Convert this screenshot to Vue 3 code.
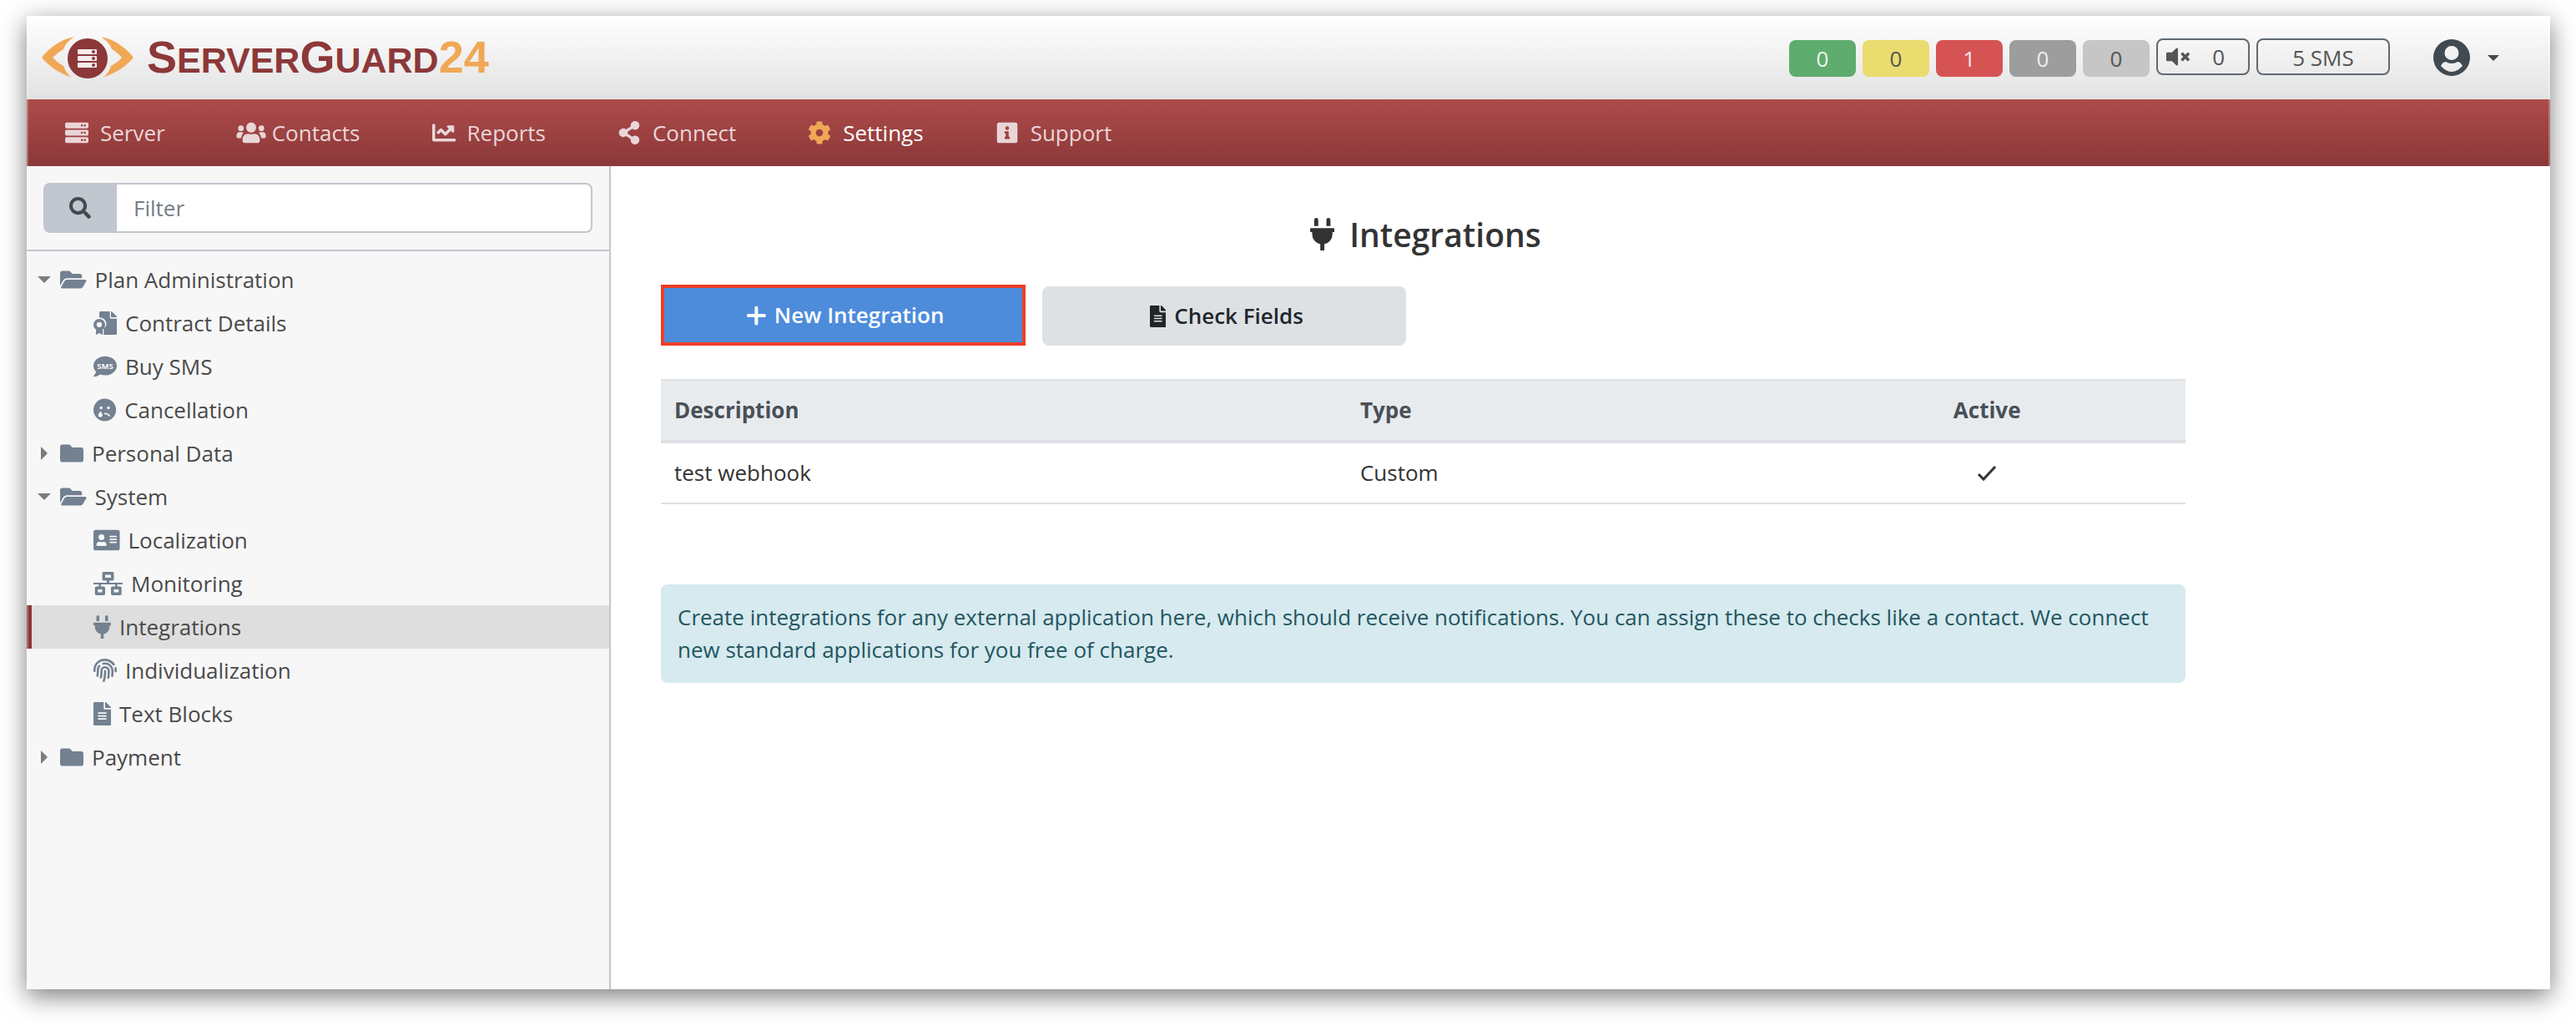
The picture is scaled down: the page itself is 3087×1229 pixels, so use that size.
<script setup>
import { ref } from 'vue'

const FILE =
  'M224 136V0H24C10.7 0 0 10.7 0 24v464c0 13.3 10.7 24 24 24h336c13.3 0 24-10.7 24-24V160H248c-13.2 0-24-10.8-24-24zm64 236c0 6.6-5.4 12-12 12H108c-6.6 0-12-5.4-12-12v-8c0-6.6 5.4-12 12-12h168c6.6 0 12 5.4 12 12v8zm0-64c0 6.6-5.4 12-12 12H108c-6.6 0-12-5.4-12-12v-8c0-6.6 5.4-12 12-12h168c6.6 0 12 5.4 12 12v8zm0-72v8c0 6.6-5.4 12-12 12H108c-6.6 0-12-5.4-12-12v-8c0-6.6 5.4-12 12-12h168c6.6 0 12 5.4 12 12zm96-114.1v6.1H256V0h6.1c6.4 0 12.5 2.5 17 7l97.9 98c4.5 4.5 7 10.6 7 16.9z'
const PLUG =
  'M320,32a32,32,0,0,0-64,0v96h64Zm48,128H16A16,16,0,0,0,0,176v32a16,16,0,0,0,16,16H32v32A160.07,160.07,0,0,0,160,412.8V512h64V412.8A160.07,160.07,0,0,0,352,256V224h16a16,16,0,0,0,16-16V176A16,16,0,0,0,368,160ZM128,32a32,32,0,0,0-64,0v96h64Z'
const FOLDER =
  'M464 128H272l-64-64H48C21.49 64 0 85.49 0 112v288c0 26.51 21.49 48 48 48h416c26.51 0 48-21.49 48-48V176c0-26.51-21.49-48-48-48z'
const FOLDER_OPEN =
  'M572.694 292.093L500.27 416.248A63.997 63.997 0 0 1 444.989 448H45.025c-18.523 0-30.064-20.093-20.731-36.093l72.424-124.155A64 64 0 0 1 152 256h399.964c18.523 0 30.064 20.093 20.73 36.093zM152 224h328v-48c0-26.51-21.49-48-48-48H272l-64-64H48C21.49 64 0 85.49 0 112v278.046l69.077-118.418C86.214 242.25 117.989 224 152 224z'
const FINGERPRINT =
  'M256.12 245.96c-13.25 0-24 10.74-24 24 1.14 72.25-8.14 141.9-27.7 211.55-2.73 9.72 2.15 30.49 23.12 30.49 10.48 0 20.11-6.92 23.09-17.52 13.53-47.91 31.04-125.41 29.48-224.52.01-13.25-10.73-24-23.99-24zm-.86-81.73C194 164.16 151.25 211.3 152.1 265.32c.75 47.94-3.75 95.91-13.37 142.55-2.69 12.98 5.67 25.69 18.64 28.36 13.05 2.67 25.67-5.66 28.36-18.64 10.34-50.09 15.17-101.58 14.37-153.02-.41-25.95 19.92-52.49 54.45-52.34 31.31.47 57.15 25.34 57.62 55.47.77 48.05-2.81 96.33-10.61 143.55-2.17 13.06 6.69 25.42 19.76 27.58 19.97 3.33 26.81-15.1 27.58-19.77 8.28-50.03 12.06-101.21 11.27-152.11-.88-55.8-47.94-101.88-104.91-102.72zm-110.69-19.78c-10.3-8.34-25.37-6.8-33.76 3.48-25.62 31.5-39.39 71.28-38.75 112 .59 37.58-2.47 75.27-9.11 112.05-2.34 13.05 6.31 25.53 19.36 27.89 20.11 3.5 27.07-14.81 27.89-19.36 7.19-39.84 10.5-80.66 9.86-121.33-.47-29.88 9.2-57.88 28-80.97 8.35-10.28 6.79-25.39-3.49-33.76zm109.47-62.33c-15.41-.41-30.87 1.44-45.78 4.97-12.89 3.06-20.87 15.98-17.83 28.89 3.06 12.89 16 20.83 28.89 17.83 11.05-2.61 22.47-3.77 34-3.69 75.43 1.13 137.73 61.5 138.88 134.58.59 37.88-1.28 76.11-5.58 113.63-1.5 13.17 7.95 25.08 21.11 26.58 16.72 1.95 25.51-11.88 26.58-21.11a929.06 929.06 0 0 0 5.89-119.85c-1.56-98.75-85.07-180.33-186.16-181.83zm252.07 121.45c-2.86-12.92-15.51-21.2-28.61-18.27-12.94 2.86-21.12 15.66-18.26 28.61 4.71 21.41 4.91 37.41 4.7 61.6-.11 13.27 10.55 24.09 23.8 24.2h.2c13.17 0 23.89-10.61 24-23.8.18-22.18.4-44.11-5.83-72.34zm-40.12-90.72C417.29 43.46 337.6 1.29 252.81.02 183.02-.82 118.47 24.91 70.46 72.94 24.09 119.37-.9 181.04.14 246.65l-.12 21.47c-.39 13.25 10.03 24.31 23.28 24.69.23.02.48.02.72.02 12.92 0 23.59-10.3 23.97-23.3l.16-23.64c-.83-52.5 19.16-101.86 56.28-139 38.76-38.8 91.34-59.67 147.68-58.86 69.45 1.03 134.73 35.56 174.62 92.39 7.61 10.86 22.56 13.45 33.42 5.86 10.84-7.62 13.46-22.59 5.84-33.43z'
const CONTRACT =
  'M128 24a24 24 0 0 1 24-24H360V136a24 24 0 0 0 24 24H512V488a24 24 0 0 1-24 24H224V378a158 158 0 0 0 60-122A158 158 0 0 0 128 132ZM384 0h8c6 0 12 2 17 7l96 98c5 5 7 11 7 17v6H384ZM128 164a128 128 0 1 1 0 256A128 128 0 1 1 128 164ZM128 232a58 58 0 1 0 0 116 58 58 0 1 0 0-116ZM56 400 128 424 200 400V505c0 7-7 9-12 5L128 470 68 510c-5 4-12 2-12-5Z'
const SAD =
  'M248 8C111 8 0 119 0 256s111 248 248 248 248-111 248-248S385 8 248 8zm80 168c17.7 0 32 14.3 32 32s-14.3 32-32 32-32-14.3-32-32 14.3-32 32-32zM152 416c-26.5 0-48-21-48-47 0-20 28.5-60.4 41.6-77.8 3.2-4.3 9.6-4.3 12.8 0C171.5 308.6 200 349 200 369c0 26-21.5 47-48 47zm16-176c-17.7 0-32-14.3-32-32s14.3-32 32-32 32 14.3 32 32-14.3 32-32 32zm170.2 154.2C315.8 367.4 282.9 352 248 352c-21.2 0-21.2-32 0-32 44.4 0 86.3 19.6 114.7 53.8 13.8 16.4-11.2 36.5-24.5 20.4z'
const IDCARD =
  'M48 32H528A48 48 0 0 1 576 80V432A48 48 0 0 1 528 480H48A48 48 0 0 1 0 432V80A48 48 0 0 1 48 32ZM176 128A64 64 0 1 0 176 256 64 64 0 1 0 176 128ZM64 362c0 12 10 22 22 22H266c12 0 22-10 22-22V358c0-36-30-66-66-66-14 0-22 8-46 8s-32-8-46-8c-36 0-66 30-66 66ZM360 160a8 8 0 0 0-8 8v16a8 8 0 0 0 8 8H504a8 8 0 0 0 8-8v-16a8 8 0 0 0-8-8ZM360 224a8 8 0 0 0-8 8v16a8 8 0 0 0 8 8H504a8 8 0 0 0 8-8v-16a8 8 0 0 0-8-8ZM360 288a8 8 0 0 0-8 8v16a8 8 0 0 0 8 8H504a8 8 0 0 0 8-8v-16a8 8 0 0 0-8-8Z'
const NETWORK =
  'M224 0H416A32 32 0 0 1 448 32V160A32 32 0 0 1 416 192H348V236H628a12 12 0 0 1 12 12V264a12 12 0 0 1-12 12H524V320H584A32 32 0 0 1 616 352V480A32 32 0 0 1 584 512H416A32 32 0 0 1 384 480V352A32 32 0 0 1 416 320H476V276H164V320H224A32 32 0 0 1 256 352V480A32 32 0 0 1 224 512H64A32 32 0 0 1 32 480V352A32 32 0 0 1 64 320H116V276H12A12 12 0 0 1 0 264V248A12 12 0 0 1 12 236H292V192H224A32 32 0 0 1 192 160V32A32 32 0 0 1 224 0ZM256 64V128H384V64ZM96 384V448H192V384ZM448 384V448H552V384Z'
const SERVER =
  'M32 32H480A32 32 0 0 1 512 64V128A32 32 0 0 1 480 160H32A32 32 0 0 1 0 128V64A32 32 0 0 1 32 32ZM32 192H480A32 32 0 0 1 512 224V288A32 32 0 0 1 480 320H32A32 32 0 0 1 0 288V224A32 32 0 0 1 32 192ZM32 352H480A32 32 0 0 1 512 384V448A32 32 0 0 1 480 480H32A32 32 0 0 1 0 448V384A32 32 0 0 1 32 352ZM368 72a24 24 0 1 0 0 48 24 24 0 1 0 0-48ZM432 72a24 24 0 1 0 0 48 24 24 0 1 0 0-48ZM368 232a24 24 0 1 0 0 48 24 24 0 1 0 0-48ZM432 232a24 24 0 1 0 0 48 24 24 0 1 0 0-48ZM368 392a24 24 0 1 0 0 48 24 24 0 1 0 0-48ZM432 392a24 24 0 1 0 0 48 24 24 0 1 0 0-48Z'
const USERS =
  'M320 32C260 32 212 80 212 142S260 252 320 252 428 204 428 142 380 32 320 32ZM96 96A62 62 0 1 0 96 220 62 62 0 1 0 96 96ZM544 96A62 62 0 1 0 544 220 62 62 0 1 0 544 96ZM250 280C180 280 132 332 132 400V440C132 464 150 480 174 480H466C490 480 508 464 508 440V400C508 332 460 280 390 280 366 280 350 292 320 292S274 280 250 280ZM64 240C28 240 0 270 0 306V344C0 362 12 374 30 374H100C104 330 124 290 154 262 142 248 126 240 110 240ZM576 240C612 240 640 270 640 306V344C640 362 628 374 610 374H540C536 330 516 290 486 262 498 248 514 240 530 240Z'
const CHART =
  'M496 384H64V80c0-8.84-7.16-16-16-16H16C7.16 64 0 71.16 0 80v336c0 17.67 14.33 32 32 32h464c8.84 0 16-7.16 16-16v-32c0-8.84-7.16-16-16-16zM464 96H345.94c-21.38 0-32.09 25.85-16.97 40.97l32.4 32.4L288 242.75l-73.37-73.37c-12.5-12.5-32.76-12.5-45.25 0l-68.69 68.69c-6.25 6.25-6.25 16.38 0 22.63l22.62 22.62c6.25 6.25 16.38 6.25 22.63 0L192 237.25l73.37 73.37c12.5 12.5 32.76 12.5 45.25 0l96-96 32.4 32.4c15.12 15.12 40.97 4.41 40.97-16.97V112c.01-8.84-7.15-16-15.99-16z'
const SHARE =
  'M352 320c-22.608 0-43.387 7.819-59.79 20.895l-102.486-64.054a96.551 96.551 0 0 0 0-41.683l102.486-64.054C308.613 184.181 329.392 192 352 192c53.019 0 96-42.981 96-96S405.019 0 352 0s-96 42.981-96 96c0 7.158.79 14.13 2.276 20.841L155.79 180.895C139.387 167.819 118.608 160 96 160c-53.019 0-96 42.981-96 96s42.981 96 96 96c22.608 0 43.387-7.819 59.79-20.895l102.486 64.054A96.301 96.301 0 0 0 256 416c0 53.019 42.981 96 96 96s96-42.981 96-96-42.981-96-96-96z'
const COG =
  'M487.4 315.7l-42.6-24.6c4.3-23.2 4.3-47 0-70.2l42.6-24.6c4.9-2.8 7.1-8.6 5.5-14-11.1-35.6-30-67.8-54.7-94.6-3.8-4.1-10-5.1-14.8-2.3L380.8 110c-17.9-15.4-38.5-27.3-60.8-35.1V25.8c0-5.6-3.9-10.5-9.4-11.7-36.7-8.2-74.3-7.8-109.2 0-5.5 1.2-9.4 6.1-9.4 11.7V75c-22.2 7.9-42.8 19.8-60.8 35.1L88.7 85.5c-4.9-2.8-11-1.9-14.8 2.3-24.7 26.7-43.6 58.9-54.7 94.6-1.7 5.4.6 11.2 5.5 14L67.3 221c-4.3 23.2-4.3 47 0 70.2l-42.6 24.6c-4.9 2.8-7.1 8.6-5.5 14 11.1 35.6 30 67.8 54.7 94.6 3.8 4.1 10 5.1 14.8 2.3l42.6-24.6c17.9 15.4 38.5 27.3 60.8 35.1v49.2c0 5.6 3.9 10.5 9.4 11.7 36.7 8.2 74.3 7.8 109.2 0 5.5-1.2 9.4-6.1 9.4-11.7v-49.2c22.2-7.9 42.8-19.8 60.8-35.1l42.6 24.6c4.9 2.8 11 1.9 14.8-2.3 24.7-26.7 43.6-58.9 54.7-94.6 1.5-5.5-.7-11.3-5.6-14.1zM256 336c-44.1 0-80-35.9-80-80s35.9-80 80-80 80 35.9 80 80-35.9 80-80 80z'
const INFO =
  'M48 32H400A48 48 0 0 1 448 80V432A48 48 0 0 1 400 480H48A48 48 0 0 1 0 432V80A48 48 0 0 1 48 32ZM224 112a42 42 0 1 0 0 84 42 42 0 1 0 0-84ZM180 222a12 12 0 0 0-12 12V260a12 12 0 0 0 12 12H192V344H180a12 12 0 0 0-12 12V382a12 12 0 0 0 12 12H268a12 12 0 0 0 12-12V356a12 12 0 0 0-12-12H256V234a12 12 0 0 0-12-12Z'

const menu = [
  { label: 'Server', w: 512, d: SERVER },
  { label: 'Contacts', w: 640, d: USERS, tight: true },
  { label: 'Reports', w: 512, d: CHART },
  { label: 'Connect', w: 448, d: SHARE },
  { label: 'Settings', w: 512, d: COG, active: true },
  { label: 'Support', w: 448, d: INFO }
]

const counters = [
  { tone: 'ok', value: 0, title: 'OK' },
  { tone: 'warn', value: 0, title: 'Warning' },
  { tone: 'error', value: 1, title: 'Error' },
  { tone: 'down', value: 0, title: 'Unknown' },
  { tone: 'off', value: 0, title: 'Inactive' }
]

const tree = ref([
  {
    label: 'Plan Administration',
    open: true,
    items: [
      { label: 'Contract Details', w: 512, d: CONTRACT },
      { label: 'Buy SMS', w: 512, sms: true },
      { label: 'Cancellation', w: 496, d: SAD }
    ]
  },
  { label: 'Personal Data', open: false, items: [] },
  {
    label: 'System',
    open: true,
    items: [
      { label: 'Localization', w: 576, d: IDCARD },
      { label: 'Monitoring', w: 640, d: NETWORK },
      { label: 'Integrations', w: 384, d: PLUG, active: true },
      { label: 'Individualization', w: 512, d: FINGERPRINT },
      { label: 'Text Blocks', w: 384, d: FILE }
    ]
  },
  { label: 'Payment', open: false, items: [] }
])

const integrations = [{ description: 'test webhook', type: 'Custom', active: true }]
const filter = ref('')
</script>

<template>
  <div class="frame">
    <header class="top">
      <a class="brand" href="#" aria-label="ServerGuard24">
        <svg class="eye" viewBox="0 0 110 50" aria-hidden="true">
          <path fill="#f0a856" d="M0 25C10 12 24 3 39 0 33 4 28 9 26 15 21 18 17 21 13 25 17 29 21 32 26 35 28 41 32 46 36 49 22 44 10 37 0 25Z" />
          <path fill="#f0a856" d="M110 25C100 12 86 3 71 0 77 4 82 9 84 15 89 18 93 21 96 25 93 29 88 32 83 35 81 41 78 46 73 49 87 44 100 37 110 25Z" />
          <circle cx="55" cy="26" r="24" fill="#8c3839" />
          <g fill="#f4ecec">
            <rect x="43" y="15" width="23" height="6" rx="1" />
            <rect x="43" y="23" width="23" height="6" rx="1" />
            <rect x="43" y="31" width="23" height="6" rx="1" />
          </g>
          <g fill="#8c3839">
            <circle cx="62" cy="18" r="2" />
            <circle cx="62" cy="26" r="2" />
            <circle cx="62" cy="34" r="2" />
          </g>
        </svg>
        <span class="wordmark">S<small>ERVER</small>G<small>UARD</small><b>24</b></span>
      </a>
      <div class="status">
        <a v-for="c in counters" :key="c.tone" href="#" class="pill" :class="c.tone" :title="c.title">{{ c.value }}</a>
        <a href="#" class="pill outline muted" title="Muted">
          <svg class="speaker" viewBox="0 0 512 512" aria-hidden="true">
            <path d="M215 71l-89 89H24a24 24 0 0 0-24 24v144a24 24 0 0 0 24 24h102l89 89c15 15 41 4.5 41-17V88c0-21.5-26-32-41-17zM461.64 256l45.64-45.64c6.3-6.3 6.3-16.52 0-22.82l-22.82-22.82c-6.3-6.3-16.52-6.3-22.82 0L416 210.36l-45.64-45.64c-6.3-6.3-16.52-6.3-22.82 0l-22.82 22.82c-6.3 6.3-6.3 16.52 0 22.82L370.36 256l-45.63 45.63c-6.3 6.3-6.3 16.52 0 22.82l22.82 22.82c6.3 6.3 16.52 6.3 22.82 0L416 301.64l45.64 45.64c6.3 6.3 16.52 6.3 22.82 0l22.82-22.82c6.3-6.3 6.3-16.52 0-22.82L461.64 256z" />
          </svg>
          <span>0</span>
        </a>
        <a href="#" class="pill outline sms">5 SMS</a>
        <button type="button" class="account" aria-label="Account">
          <svg class="avatar" viewBox="0 0 44 44" aria-hidden="true">
            <path fill-rule="evenodd" d="M22 0A22 22 0 1 0 22 44 22 22 0 1 0 22 0ZM22 8A8 8 0 1 1 22 25 8 8 0 1 1 22 8ZM15 27C17 28 19 29 22 29S27 28 29 27C32 27 34 30 35 32 31 36 27 39 22 39S13 36 9 32C10 30 12 27 15 27Z" />
          </svg>
          <svg class="caret" viewBox="0 0 14 7" aria-hidden="true"><path d="M0 0H14L7 7Z" /></svg>
        </button>
      </div>
    </header>

    <nav class="menu" aria-label="Main">
      <a v-for="m in menu" :key="m.label" href="#" class="menu-item" :class="{ active: m.active, tight: m.tight }">
        <svg class="menu-icon" :viewBox="`0 0 ${m.w} 512`" aria-hidden="true"><path fill-rule="evenodd" :d="m.d" /></svg>
        <span>{{ m.label }}</span>
      </a>
    </nav>

    <div class="body">
      <aside class="side">
        <form class="filter" @submit.prevent>
          <label class="filter-label" for="filter" aria-label="Filter">
            <svg class="search" viewBox="0 0 512 512" aria-hidden="true">
              <path d="M505 442.7L405.3 343c-4.5-4.5-10.6-7-17-7H372c27.6-35.3 44-79.7 44-128C416 93.1 322.9 0 208 0S0 93.1 0 208s93.1 208 208 208c48.3 0 92.7-16.4 128-44v16.3c0 6.4 2.5 12.5 7 17l99.7 99.7c9.4 9.4 24.6 9.4 33.9 0l28.3-28.3c9.4-9.4 9.4-24.6.1-34zM208 336c-70.7 0-128-57.2-128-128 0-70.7 57.2-128 128-128 70.7 0 128 57.2 128 128 0 70.7-57.2 128-128 128z" />
            </svg>
          </label>
          <input id="filter" v-model="filter" class="filter-input" type="text" placeholder="Filter" />
        </form>
        <ul class="tree">
          <li v-for="g in tree" :key="g.label">
            <button type="button" class="row group" :aria-expanded="g.open" @click="g.open = !g.open">
              <span class="twist">
                <svg v-if="g.open" width="16" height="8" viewBox="0 0 16 8" aria-hidden="true"><path d="M0 0H16L8 8Z" /></svg>
                <svg v-else width="8" height="16" viewBox="0 0 8 16" aria-hidden="true"><path d="M0 0V16L8 8Z" /></svg>
              </span>
              <svg class="tree-icon" :viewBox="g.open ? '0 0 576 512' : '0 0 512 512'" aria-hidden="true">
                <path :d="g.open ? FOLDER_OPEN : FOLDER" />
              </svg>
              <span>{{ g.label }}</span>
            </button>
            <ul v-if="g.open">
              <li v-for="i in g.items" :key="i.label">
                <a href="#" class="row leaf" :class="{ active: i.active }">
                  <svg class="tree-icon" :viewBox="`0 0 ${i.w} 512`" aria-hidden="true">
                    <template v-if="i.sms">
                      <path d="M256 32C115 32 0 125 0 240c0 49 21 94 57 130-13 51-55 95-55 96-4 5-2 14 6 14 67 0 116-32 141-51 32 12 69 19 107 19 141 0 256-93 256-208S397 32 256 32Z" />
                      <text x="256" y="304" text-anchor="middle" class="bubble">SMS</text>
                    </template>
                    <path v-else fill-rule="evenodd" :d="i.d" />
                  </svg>
                  <span>{{ i.label }}</span>
                </a>
              </li>
            </ul>
          </li>
        </ul>
      </aside>

      <main class="main">
        <section class="content">
          <h1 class="title">
            <svg class="title-icon" viewBox="0 0 384 512" aria-hidden="true"><path :d="PLUG" /></svg>
            <span>Integrations</span>
          </h1>
          <div class="actions">
            <button type="button" class="btn primary">
              <svg class="btn-icon" viewBox="0 0 448 512" aria-hidden="true">
                <path d="M416 216H264V64c0-18-14-32-32-32h-16c-18 0-32 14-32 32v152H32c-18 0-32 14-32 32v16c0 18 14 32 32 32h152v152c0 18 14 32 32 32h16c18 0 32-14 32-32V296h152c18 0 32-14 32-32v-16c0-18-14-32-32-32z" />
              </svg>
              <span>New Integration</span>
            </button>
            <button type="button" class="btn plain">
              <svg class="btn-icon" viewBox="0 0 384 512" aria-hidden="true"><path :d="FILE" /></svg>
              <span>Check Fields</span>
            </button>
          </div>
          <table class="list">
            <thead>
              <tr>
                <th class="c-desc" scope="col">Description</th>
                <th class="c-type" scope="col">Type</th>
                <th class="c-active" scope="col">Active</th>
              </tr>
            </thead>
            <tbody>
              <tr v-for="r in integrations" :key="r.description">
                <td>{{ r.description }}</td>
                <td>{{ r.type }}</td>
                <td class="c-active">
                  <svg v-if="r.active" class="check" viewBox="0 0 24 20" role="img" aria-label="Active">
                    <path d="M2 11L8 17L22 2" />
                  </svg>
                </td>
              </tr>
            </tbody>
          </table>
          <p class="note">
            Create integrations for any external application here, which should receive notifications. You can assign these to checks like a contact. We connect new standard applications for you free of charge.
          </p>
        </section>
      </main>
    </div>
  </div>
</template>

<style>
body {
  margin: 0;
  background: #fff;
}
</style>

<style scoped>
.frame {
  position: relative;
  display: flex;
  flex-direction: column;
  min-height: calc(100vh - 63px);
  margin: 19px 31px 44px 32px;
  background: #fff;
  box-shadow: 0 8px 28px rgba(0, 0, 0, 0.52);
  color: #333;
  font: 26px/39px 'Open Sans', 'Noto Sans', sans-serif;
}
.frame::after {
  content: '';
  position: absolute;
  inset: 0;
  border: solid rgba(255, 255, 255, 0.25);
  border-width: 0 2px;
  pointer-events: none;
}
a {
  color: inherit;
  text-decoration: none;
}
button {
  font: inherit;
  color: inherit;
  border: 0;
  background: none;
  padding: 0;
  cursor: pointer;
}
svg {
  display: block;
  flex: none;
  fill: currentColor;
}
ul {
  list-style: none;
  margin: 0;
  padding: 0;
}

/* header */
.top {
  display: flex;
  align-items: center;
  justify-content: space-between;
  height: 100px;
  padding: 0 61px 0 18px;
  background: linear-gradient(#fff, #e2e2e2);
}
.brand {
  display: flex;
  align-items: center;
  gap: 16px;
}
.eye {
  width: 110px;
  height: 50px;
}
.wordmark {
  padding-top: 2px;
  font: bold 54px/60px 'Liberation Sans', Arial, sans-serif;
  color: #8c3839;
}
.wordmark small {
  font-size: 43px;
}
.wordmark b {
  color: #f0a856;
}
.status {
  display: flex;
  align-items: center;
  gap: 8px;
}
.pill {
  box-sizing: border-box;
  width: 80px;
  height: 44px;
  margin-top: 2px;
  border-radius: 8px;
  line-height: 44px;
  text-align: center;
  color: #555;
}
.ok {
  background: #5fac6f;
  color: #eef4ee;
}
.warn {
  background: #ebdc70;
}
.error {
  background: #d65354;
  color: #f8e8e8;
}
.down {
  background: #9d9d9d;
  color: #eee;
}
.off {
  background: #c6c6c6;
}
.outline {
  margin-top: 0;
  margin-bottom: 2px;
  border: 2px solid #5f6973;
  line-height: 42px;
}
.muted {
  display: flex;
  align-items: center;
  justify-content: space-between;
  width: 112px;
  padding: 0 28px 0 10px;
}
.speaker {
  width: 28px;
  height: 28px;
}
.sms {
  width: 160px;
}
.account {
  display: flex;
  align-items: center;
  gap: 21px;
  margin-left: 44px;
  color: #414a51;
}
.avatar {
  width: 44px;
  height: 44px;
}
.caret {
  width: 14px;
  height: 7px;
}

/* main menu */
.menu {
  display: flex;
  align-items: center;
  gap: 78px;
  height: 80px;
  padding: 0 38px;
  background: linear-gradient(#ae4b4a, #8b3839);
  color: #ead6d7;
}
.menu-item {
  display: flex;
  align-items: center;
  gap: 6px;
}
.menu-item.tight {
  gap: 3px;
  margin-left: 3px;
}
.menu-icon {
  width: 44px;
  height: 28px;
}
.menu-item.active {
  color: #fff;
}
.active .menu-icon {
  color: #f0a856;
}

/* sidebar */
.body {
  flex: 1;
  display: flex;
}
.side {
  flex: none;
  box-sizing: border-box;
  width: 700px;
  background: #f7f7f7;
  border-right: 2px solid #c1c6ce;
}
.filter {
  display: flex;
  padding: 20px;
  border-bottom: 2px solid #c1c6ce;
}
.filter-label {
  display: flex;
  align-items: center;
  justify-content: center;
  width: 88px;
  border-radius: 8px 0 0 8px;
  background: #c2c6ce;
  color: #414a51;
}
.search {
  width: 26px;
  height: 26px;
}
.filter-input {
  flex: 1;
  min-width: 0;
  box-sizing: border-box;
  height: 60px;
  padding: 0 20px;
  border: 2px solid #c2c6ce;
  border-left: 0;
  border-radius: 0 8px 8px 0;
  background: #fff;
  font: inherit;
  color: #495057;
}
.filter-input::placeholder {
  color: #747d85;
  opacity: 1;
}
.tree {
  padding-top: 8px;
  color: #4a4a4a;
}
.row {
  box-sizing: border-box;
  display: flex;
  align-items: center;
  gap: 10px;
  width: 100%;
  height: 52px;
}
.group {
  padding-left: 12px;
}
.leaf {
  padding-left: 80px;
}
.leaf.active {
  padding-left: 74px;
  border-left: 6px solid #8c3839;
  background: #dedede;
}
.twist {
  display: flex;
  justify-content: center;
  width: 18px;
  color: #7b7b7b;
}
.tree-icon {
  height: 28px;
  color: #738191;
}
.bubble {
  font: bold 175px 'Open Sans', sans-serif;
  fill: #f7f7f7;
}

/* content */
.main {
  flex: 1;
  min-width: 0;
  padding: 58px 30px 60px;
}
.content {
  box-sizing: border-box;
  width: 83.333%;
  padding: 0 30px;
}
.title {
  display: flex;
  align-items: center;
  justify-content: center;
  gap: 18px;
  margin: 0 0 37px;
  padding-left: 6px;
  font-size: 39px;
  line-height: 47px;
  font-weight: 600;
}
.title-icon {
  height: 39px;
}
.actions {
  display: flex;
  align-items: flex-end;
  gap: 20px;
  margin-bottom: 40px;
}
.btn {
  box-sizing: border-box;
  display: flex;
  align-items: center;
  justify-content: center;
  gap: 10px;
  width: 23.9%;
  height: 71px;
  padding-left: 6px;
  font-weight: 600;
}
.btn-icon {
  height: 26px;
}
.primary {
  height: 73px;
  border: 4px solid #ec3f26;
  background: #4d8cdb;
  color: #fff;
}
.plain {
  border-radius: 8px;
  background: #dde1e4;
  color: #21262b;
}
.list {
  width: 100%;
  table-layout: fixed;
  border-spacing: 0;
}
.list th,
.list td {
  box-sizing: border-box;
  padding: 16px;
  text-align: left;
  border-bottom: 2px solid #dde1e5;
}
.list th {
  border-top: 2px solid #dde1e5;
  border-bottom-width: 4px;
  background: #e8ebee;
  color: #495057;
}
.c-desc {
  width: 45%;
}
.c-type {
  width: 29%;
}
.list .c-active {
  text-align: center;
}
.check {
  width: 24px;
  height: 20px;
  margin: 0 auto;
  fill: none;
  stroke: #333;
  stroke-width: 3;
}
.note {
  margin: 96px 0 0;
  padding: 20px;
  border-radius: 8px;
  background: #d6eaef;
  color: #245660;
}
</style>
